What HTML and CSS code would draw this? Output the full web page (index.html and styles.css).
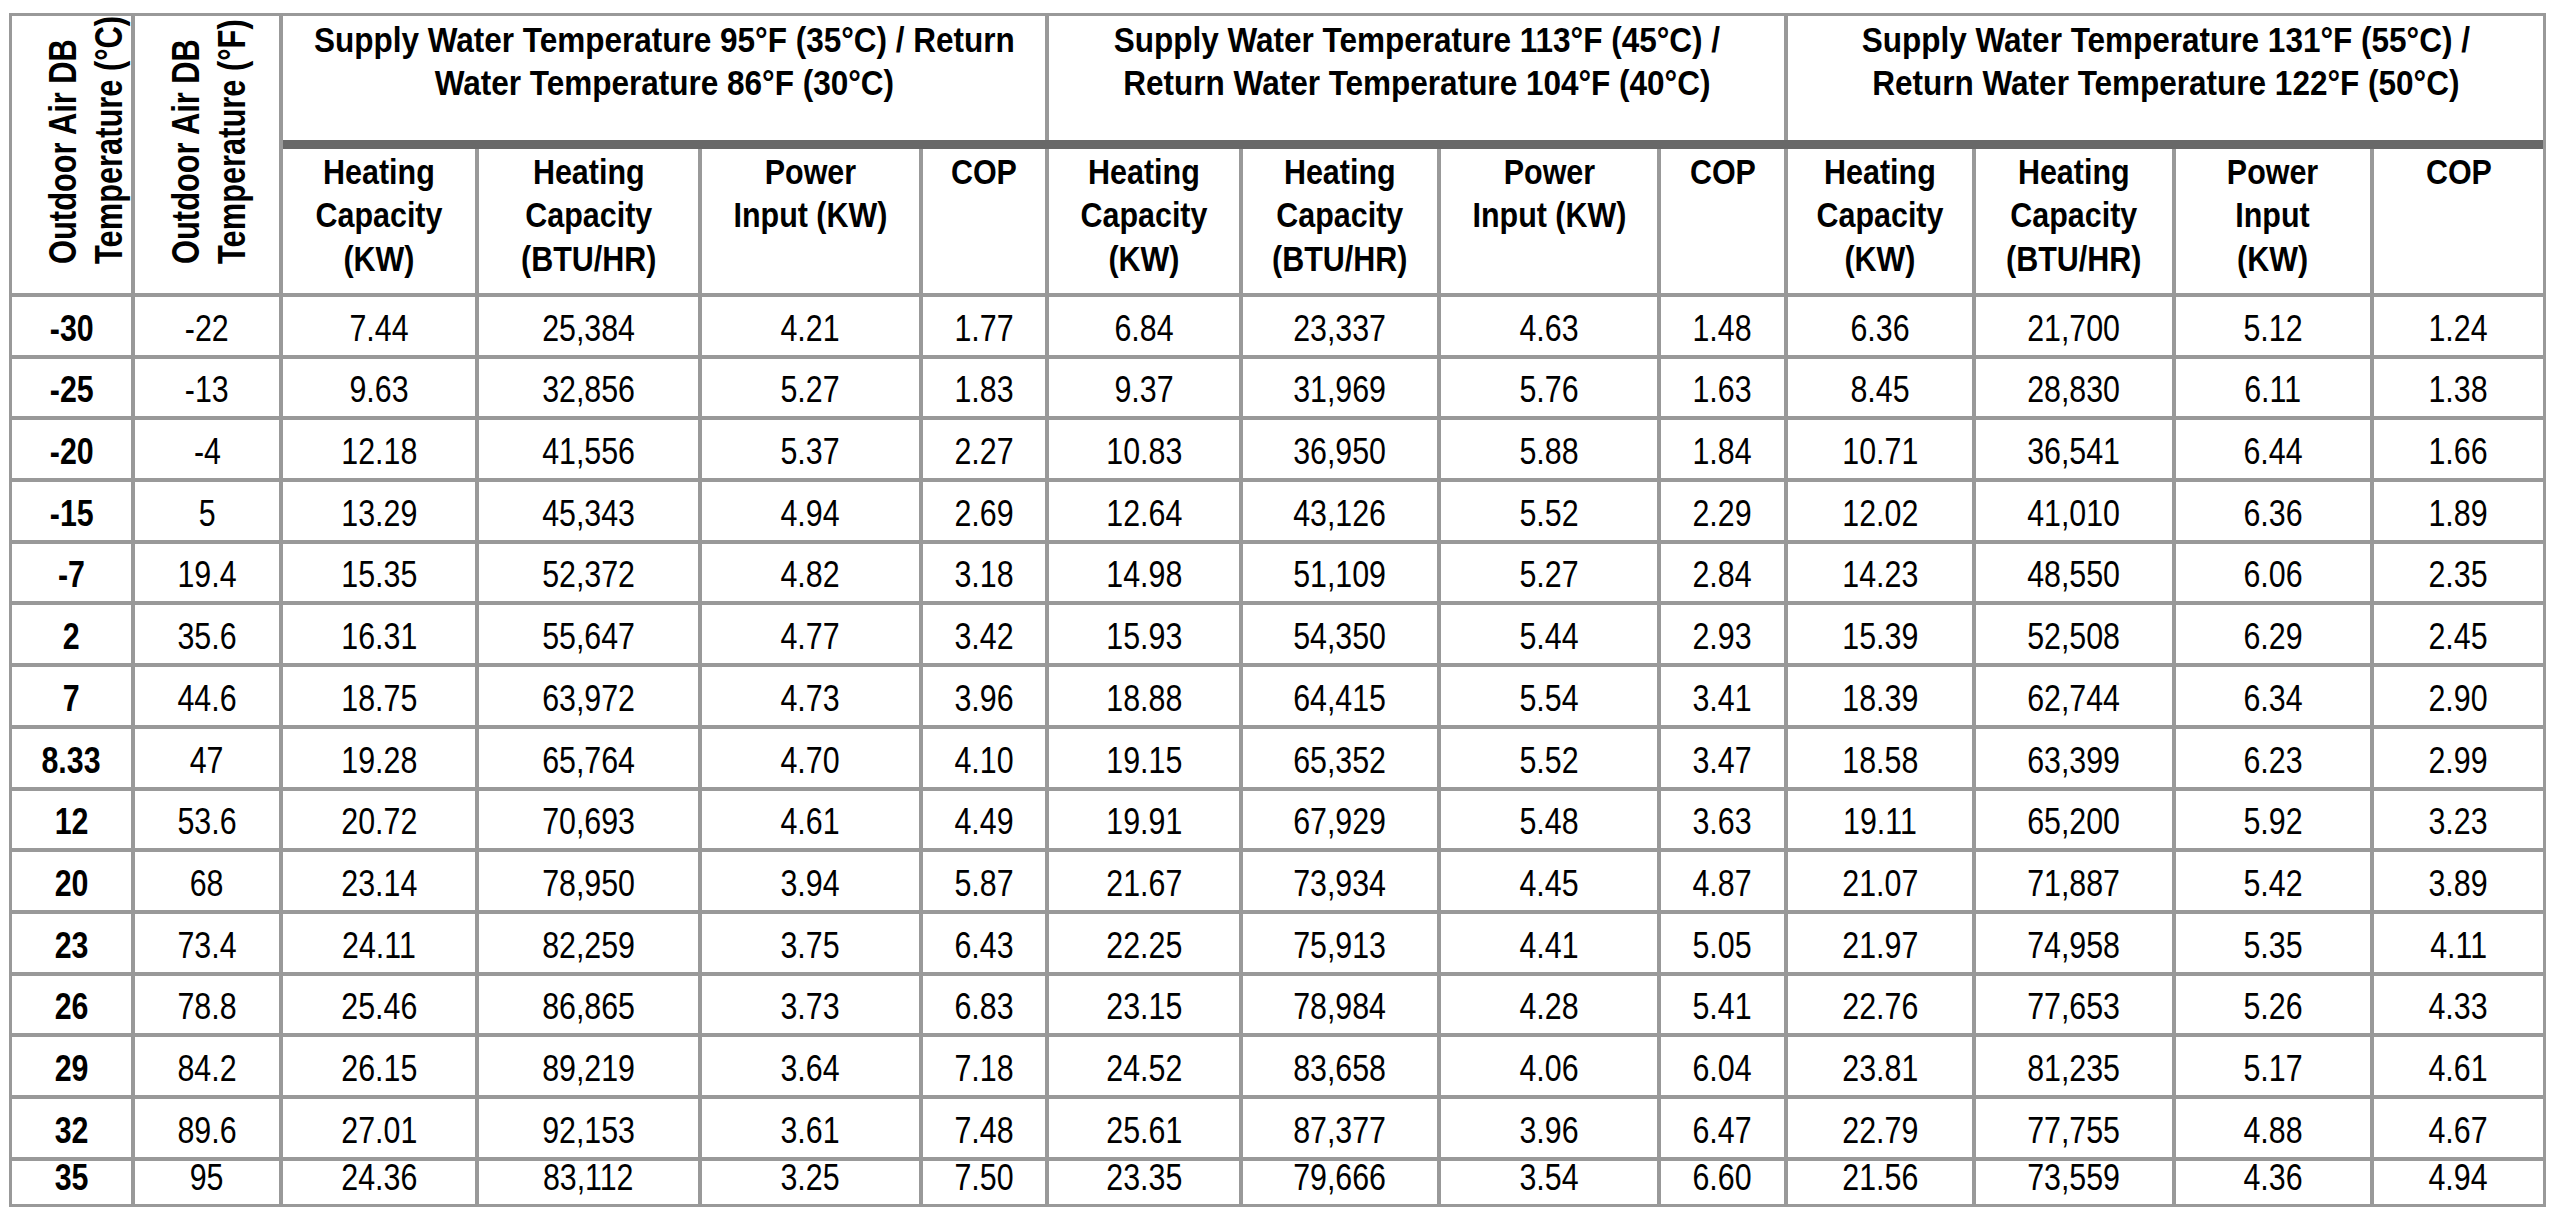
FILE: index.html
```html
<!DOCTYPE html>
<html lang="en">
<head>
<meta charset="utf-8">
<title>Heating Performance Table</title>
<link rel="stylesheet" href="styles.css">
</head>
<body>
<div class="sheet">
  <div class="tbl">
    <div class="hrow">
      <div class="c rot"><span>Outdoor Air DB<br>Temperature (°C)</span></div>
      <div class="c rot"><span>Outdoor Air DB<br>Temperature (°F)</span></div>
      <div class="c grp"><span>Supply Water Temperature 95°F (35°C) / Return<br>Water Temperature 86°F (30°C)</span></div>
      <div class="c grp"><span>Supply Water Temperature 113°F (45°C) /<br>Return Water Temperature 104°F (40°C)</span></div>
      <div class="c grp"><span>Supply Water Temperature 131°F (55°C) /<br>Return Water Temperature 122°F (50°C)</span></div>
    </div>
    <div class="dark"></div>
    <div class="hrow">
      <div class="c sub"><span>Heating<br>Capacity<br>(KW)</span></div>
      <div class="c sub"><span>Heating<br>Capacity<br>(BTU/HR)</span></div>
      <div class="c sub"><span>Power<br>Input (KW)</span></div>
      <div class="c sub"><span>COP</span></div>
      <div class="c sub"><span>Heating<br>Capacity<br>(KW)</span></div>
      <div class="c sub"><span>Heating<br>Capacity<br>(BTU/HR)</span></div>
      <div class="c sub"><span>Power<br>Input (KW)</span></div>
      <div class="c sub"><span>COP</span></div>
      <div class="c sub"><span>Heating<br>Capacity<br>(KW)</span></div>
      <div class="c sub"><span>Heating<br>Capacity<br>(BTU/HR)</span></div>
      <div class="c sub"><span>Power<br>Input<br>(KW)</span></div>
      <div class="c sub"><span>COP</span></div>
    </div>

    <div class="drow"><div class="c d b"><span>-30</span></div><div class="c d"><span>-22</span></div><div class="c d"><span>7.44</span></div><div class="c d"><span>25,384</span></div><div class="c d"><span>4.21</span></div><div class="c d"><span>1.77</span></div><div class="c d"><span>6.84</span></div><div class="c d"><span>23,337</span></div><div class="c d"><span>4.63</span></div><div class="c d"><span>1.48</span></div><div class="c d"><span>6.36</span></div><div class="c d"><span>21,700</span></div><div class="c d"><span>5.12</span></div><div class="c d"><span>1.24</span></div></div>
    <div class="drow"><div class="c d b"><span>-25</span></div><div class="c d"><span>-13</span></div><div class="c d"><span>9.63</span></div><div class="c d"><span>32,856</span></div><div class="c d"><span>5.27</span></div><div class="c d"><span>1.83</span></div><div class="c d"><span>9.37</span></div><div class="c d"><span>31,969</span></div><div class="c d"><span>5.76</span></div><div class="c d"><span>1.63</span></div><div class="c d"><span>8.45</span></div><div class="c d"><span>28,830</span></div><div class="c d"><span>6.11</span></div><div class="c d"><span>1.38</span></div></div>
    <div class="drow"><div class="c d b"><span>-20</span></div><div class="c d"><span>-4</span></div><div class="c d"><span>12.18</span></div><div class="c d"><span>41,556</span></div><div class="c d"><span>5.37</span></div><div class="c d"><span>2.27</span></div><div class="c d"><span>10.83</span></div><div class="c d"><span>36,950</span></div><div class="c d"><span>5.88</span></div><div class="c d"><span>1.84</span></div><div class="c d"><span>10.71</span></div><div class="c d"><span>36,541</span></div><div class="c d"><span>6.44</span></div><div class="c d"><span>1.66</span></div></div>
    <div class="drow"><div class="c d b"><span>-15</span></div><div class="c d"><span>5</span></div><div class="c d"><span>13.29</span></div><div class="c d"><span>45,343</span></div><div class="c d"><span>4.94</span></div><div class="c d"><span>2.69</span></div><div class="c d"><span>12.64</span></div><div class="c d"><span>43,126</span></div><div class="c d"><span>5.52</span></div><div class="c d"><span>2.29</span></div><div class="c d"><span>12.02</span></div><div class="c d"><span>41,010</span></div><div class="c d"><span>6.36</span></div><div class="c d"><span>1.89</span></div></div>
    <div class="drow"><div class="c d b"><span>-7</span></div><div class="c d"><span>19.4</span></div><div class="c d"><span>15.35</span></div><div class="c d"><span>52,372</span></div><div class="c d"><span>4.82</span></div><div class="c d"><span>3.18</span></div><div class="c d"><span>14.98</span></div><div class="c d"><span>51,109</span></div><div class="c d"><span>5.27</span></div><div class="c d"><span>2.84</span></div><div class="c d"><span>14.23</span></div><div class="c d"><span>48,550</span></div><div class="c d"><span>6.06</span></div><div class="c d"><span>2.35</span></div></div>
    <div class="drow"><div class="c d b"><span>2</span></div><div class="c d"><span>35.6</span></div><div class="c d"><span>16.31</span></div><div class="c d"><span>55,647</span></div><div class="c d"><span>4.77</span></div><div class="c d"><span>3.42</span></div><div class="c d"><span>15.93</span></div><div class="c d"><span>54,350</span></div><div class="c d"><span>5.44</span></div><div class="c d"><span>2.93</span></div><div class="c d"><span>15.39</span></div><div class="c d"><span>52,508</span></div><div class="c d"><span>6.29</span></div><div class="c d"><span>2.45</span></div></div>
    <div class="drow"><div class="c d b"><span>7</span></div><div class="c d"><span>44.6</span></div><div class="c d"><span>18.75</span></div><div class="c d"><span>63,972</span></div><div class="c d"><span>4.73</span></div><div class="c d"><span>3.96</span></div><div class="c d"><span>18.88</span></div><div class="c d"><span>64,415</span></div><div class="c d"><span>5.54</span></div><div class="c d"><span>3.41</span></div><div class="c d"><span>18.39</span></div><div class="c d"><span>62,744</span></div><div class="c d"><span>6.34</span></div><div class="c d"><span>2.90</span></div></div>
    <div class="drow"><div class="c d b"><span>8.33</span></div><div class="c d"><span>47</span></div><div class="c d"><span>19.28</span></div><div class="c d"><span>65,764</span></div><div class="c d"><span>4.70</span></div><div class="c d"><span>4.10</span></div><div class="c d"><span>19.15</span></div><div class="c d"><span>65,352</span></div><div class="c d"><span>5.52</span></div><div class="c d"><span>3.47</span></div><div class="c d"><span>18.58</span></div><div class="c d"><span>63,399</span></div><div class="c d"><span>6.23</span></div><div class="c d"><span>2.99</span></div></div>
    <div class="drow"><div class="c d b"><span>12</span></div><div class="c d"><span>53.6</span></div><div class="c d"><span>20.72</span></div><div class="c d"><span>70,693</span></div><div class="c d"><span>4.61</span></div><div class="c d"><span>4.49</span></div><div class="c d"><span>19.91</span></div><div class="c d"><span>67,929</span></div><div class="c d"><span>5.48</span></div><div class="c d"><span>3.63</span></div><div class="c d"><span>19.11</span></div><div class="c d"><span>65,200</span></div><div class="c d"><span>5.92</span></div><div class="c d"><span>3.23</span></div></div>
    <div class="drow"><div class="c d b"><span>20</span></div><div class="c d"><span>68</span></div><div class="c d"><span>23.14</span></div><div class="c d"><span>78,950</span></div><div class="c d"><span>3.94</span></div><div class="c d"><span>5.87</span></div><div class="c d"><span>21.67</span></div><div class="c d"><span>73,934</span></div><div class="c d"><span>4.45</span></div><div class="c d"><span>4.87</span></div><div class="c d"><span>21.07</span></div><div class="c d"><span>71,887</span></div><div class="c d"><span>5.42</span></div><div class="c d"><span>3.89</span></div></div>
    <div class="drow"><div class="c d b"><span>23</span></div><div class="c d"><span>73.4</span></div><div class="c d"><span>24.11</span></div><div class="c d"><span>82,259</span></div><div class="c d"><span>3.75</span></div><div class="c d"><span>6.43</span></div><div class="c d"><span>22.25</span></div><div class="c d"><span>75,913</span></div><div class="c d"><span>4.41</span></div><div class="c d"><span>5.05</span></div><div class="c d"><span>21.97</span></div><div class="c d"><span>74,958</span></div><div class="c d"><span>5.35</span></div><div class="c d"><span>4.11</span></div></div>
    <div class="drow"><div class="c d b"><span>26</span></div><div class="c d"><span>78.8</span></div><div class="c d"><span>25.46</span></div><div class="c d"><span>86,865</span></div><div class="c d"><span>3.73</span></div><div class="c d"><span>6.83</span></div><div class="c d"><span>23.15</span></div><div class="c d"><span>78,984</span></div><div class="c d"><span>4.28</span></div><div class="c d"><span>5.41</span></div><div class="c d"><span>22.76</span></div><div class="c d"><span>77,653</span></div><div class="c d"><span>5.26</span></div><div class="c d"><span>4.33</span></div></div>
    <div class="drow"><div class="c d b"><span>29</span></div><div class="c d"><span>84.2</span></div><div class="c d"><span>26.15</span></div><div class="c d"><span>89,219</span></div><div class="c d"><span>3.64</span></div><div class="c d"><span>7.18</span></div><div class="c d"><span>24.52</span></div><div class="c d"><span>83,658</span></div><div class="c d"><span>4.06</span></div><div class="c d"><span>6.04</span></div><div class="c d"><span>23.81</span></div><div class="c d"><span>81,235</span></div><div class="c d"><span>5.17</span></div><div class="c d"><span>4.61</span></div></div>
    <div class="drow"><div class="c d b"><span>32</span></div><div class="c d"><span>89.6</span></div><div class="c d"><span>27.01</span></div><div class="c d"><span>92,153</span></div><div class="c d"><span>3.61</span></div><div class="c d"><span>7.48</span></div><div class="c d"><span>25.61</span></div><div class="c d"><span>87,377</span></div><div class="c d"><span>3.96</span></div><div class="c d"><span>6.47</span></div><div class="c d"><span>22.79</span></div><div class="c d"><span>77,755</span></div><div class="c d"><span>4.88</span></div><div class="c d"><span>4.67</span></div></div>
    <div class="drow"><div class="c d b"><span>35</span></div><div class="c d"><span>95</span></div><div class="c d"><span>24.36</span></div><div class="c d"><span>83,112</span></div><div class="c d"><span>3.25</span></div><div class="c d"><span>7.50</span></div><div class="c d"><span>23.35</span></div><div class="c d"><span>79,666</span></div><div class="c d"><span>3.54</span></div><div class="c d"><span>6.60</span></div><div class="c d"><span>21.56</span></div><div class="c d"><span>73,559</span></div><div class="c d"><span>4.36</span></div><div class="c d"><span>4.94</span></div></div>
  </div>
</div>
</body>
</html>
```

FILE: styles.css
```css
html, body {
  margin: 0;
  padding: 0;
  background: #ffffff;
}

body {
  font-family: "Liberation Sans", Arial, sans-serif;
  color: #000000;
}

.sheet {
  padding: 13px 0 0 9px;
}

.tbl {
  display: grid;
  box-sizing: border-box;
  width: 2537px;
  border: 3px solid #999999;
  grid-template-columns: 123px 148px 196px 223px 221px 126px 194px 198px 220px 127px 188px 200px 198px 169px;
  grid-template-rows: 124px 9px 148px repeat(14, 61.7px) 43.3px;
}

.hrow,
.drow {
  display: contents;
}

.c {
  box-sizing: border-box;
  border-right: 4px solid #999999;
  border-bottom: 4px solid #999999;
  display: flex;
  justify-content: center;
}

.hrow > .c:last-child,
.drow > .c:last-child {
  border-right: 0;
}

.drow:last-child > .c {
  border-bottom: 0;
}

/* horizontal text is set in a narrow cut: Arial metrics condensed */
.grp > span,
.sub > span,
.d > span {
  display: inline-block;
  white-space: nowrap;
  text-align: center;
}

.grp > span {
  transform: scaleX(0.9);
}

.sub > span {
  transform: scaleX(0.87);
}

.d > span {
  transform: scaleX(0.82);
}

/* rotated row-header cells */
.rot {
  grid-row: span 3;
  justify-content: flex-start;
  padding-left: 28px;
}

.rot > span {
  writing-mode: vertical-rl;
  transform: rotate(180deg) scaleY(0.79);
  text-align: center;
  font-weight: bold;
  font-size: 39px;
  line-height: 45.7px;
  white-space: nowrap;
}

/* group headers */
.grp {
  grid-column: span 4;
  border-bottom: 0;
  align-items: flex-start;
  padding-top: 2px;
  font-weight: bold;
  font-size: 35px;
  line-height: 43.3px;
}

.dark {
  grid-column: 3 / -1;
  background: #686868;
}

/* sub headers */
.sub {
  align-items: flex-start;
  padding-top: 1px;
  font-weight: bold;
  font-size: 35px;
  line-height: 43.3px;
}

/* data cells */
.d {
  align-items: flex-end;
  padding-bottom: 5px;
  font-size: 37px;
  line-height: 43px;
}

.b {
  font-weight: bold;
}
```
